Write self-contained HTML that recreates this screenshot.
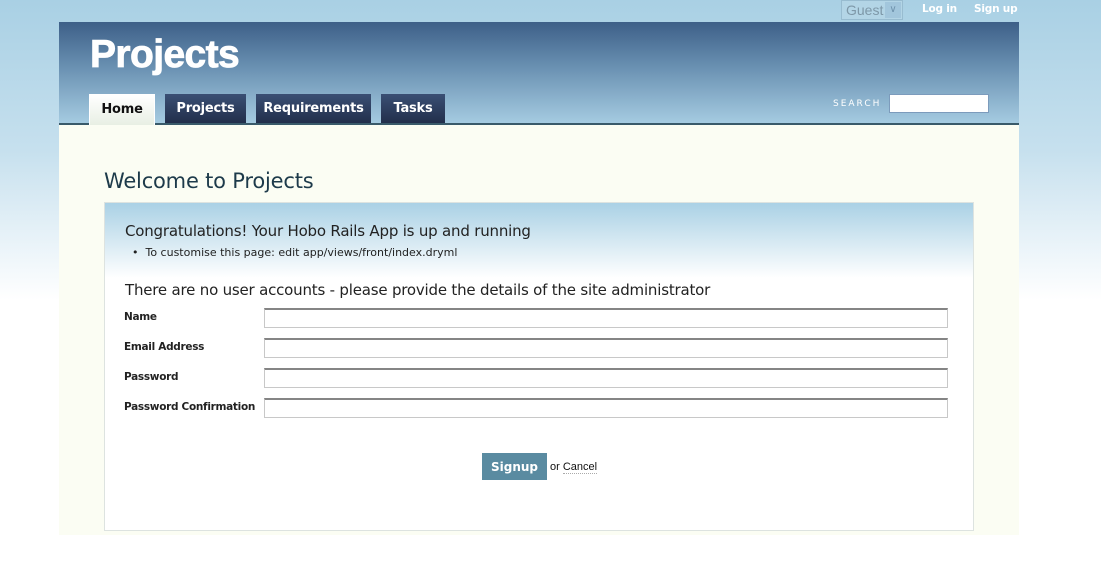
<!DOCTYPE html>
<html><head><style>
*{margin:0;padding:0;box-sizing:border-box}
body{width:1101px;height:573px;overflow:hidden;font-family:"DejaVu Sans","Liberation Sans",sans-serif;background:linear-gradient(#a9d0e4 0px,#c6e0ee 150px,#ffffff 300px);position:relative}
.a{position:absolute}
#guest{left:841px;top:0;width:62px;height:20px;border:1px solid #98bcd0;background:#b3d5e6;color:#7e98a8;font-size:14px;padding:1px 0 0 4px;font-family:"Liberation Sans",sans-serif}
#guest span{position:absolute;right:1px;top:1px;width:16px;height:16px;background:#a2c6dc;color:#6f93ad;font-size:10px;text-align:center;line-height:16px}
.tl{color:#fff;font-weight:bold;font-size:10.5px;top:3px;letter-spacing:-0.2px}
#hdr{left:59px;top:22px;width:960px;height:101px;background:linear-gradient(#3d5f88,#6a91b2 45%,#a5cbe1)}
#bar{left:59px;top:123px;width:960px;height:2px;background:#395a6a}
#main{left:59px;top:125px;width:960px;height:410px;background:#fbfdf3}
#logo{left:90px;top:33px;color:#fff;font-family:"Liberation Sans",sans-serif;font-weight:900;font-size:39px;letter-spacing:-0.6px;-webkit-text-stroke:0.8px #fff}
.tab{top:94px;height:29px;background:linear-gradient(#3a4f74,#222f4b);color:#fff;font-weight:bold;font-size:13px;text-align:center;line-height:30px;letter-spacing:-0.2px}
#home{background:linear-gradient(#fff,#e8efe4);color:#111;border:1px solid #fff;border-bottom:none;height:31px;font-weight:bold;line-height:29px}
#srch{left:833px;top:99px;color:#fff;font-size:9px;letter-spacing:2px}
#sbox{left:889px;top:94px;width:100px;height:19px;background:#fff;border:1px solid #7c9bbc}
h1{position:absolute;left:104px;top:169px;font-weight:normal;font-size:21px;color:#1d3a4a;letter-spacing:-0.2px}
#box{left:104px;top:202px;width:870px;height:329px;border:1px solid #dde3e0;background:linear-gradient(#aad1e5,#fff 75px)}
.t{font-size:15px;color:#222;letter-spacing:-0.2px}
.s{font-size:11px;color:#222}
.lb{left:124px;font-size:10.5px;font-weight:bold;color:#222;letter-spacing:-0.3px}
.in{left:264px;width:684px;height:20px;border:1px solid #c8c8c8;border-top:2px solid #858585;background:#fff}
#btn{left:482px;top:453px;width:65px;height:27px;background:#5a8ba1;color:#fff;font-weight:bold;font-size:12px;text-align:center;line-height:28px}
</style></head><body>
<div class="a" id="guest">Guest<span>&#8744;</span></div>
<div class="a tl" style="left:922px">Log in</div>
<div class="a tl" style="left:974px">Sign up</div>
<div class="a" id="hdr"></div>
<div class="a" id="main"></div>
<div class="a" id="bar"></div>
<div class="a" id="logo">Projects</div>
<div class="a tab" id="home" style="left:89px;width:66px">Home</div>
<div class="a tab" style="left:165px;width:81px">Projects</div>
<div class="a tab" style="left:256px;width:115px">Requirements</div>
<div class="a tab" style="left:381px;width:64px">Tasks</div>
<div class="a" id="srch">SEARCH</div>
<div class="a" id="sbox"></div>
<h1>Welcome to Projects</h1>
<div class="a" id="box"></div>
<div class="a t" style="left:125px;top:222px">Congratulations! Your Hobo Rails App is up and running</div>
<div class="a s" style="left:132px;top:246px">&#8226;&nbsp; To customise this page: edit app/views/front/index.dryml</div>
<div class="a t" style="left:125px;top:281px">There are no user accounts - please provide the details of the site administrator</div>
<div class="a lb" style="top:311px">Name</div>
<div class="a lb" style="top:341px">Email Address</div>
<div class="a lb" style="top:371px">Password</div>
<div class="a lb" style="top:401px">Password Confirmation</div>
<div class="a in" style="top:308px"></div>
<div class="a in" style="top:338px"></div>
<div class="a in" style="top:368px"></div>
<div class="a in" style="top:398px"></div>
<div class="a" id="btn">Signup</div>
<div class="a" style="left:550px;top:461px;font-size:11px;font-family:'Liberation Sans',sans-serif;color:#111">or <span style="border-bottom:1px dotted #aaa">Cancel</span></div>
</body></html>
